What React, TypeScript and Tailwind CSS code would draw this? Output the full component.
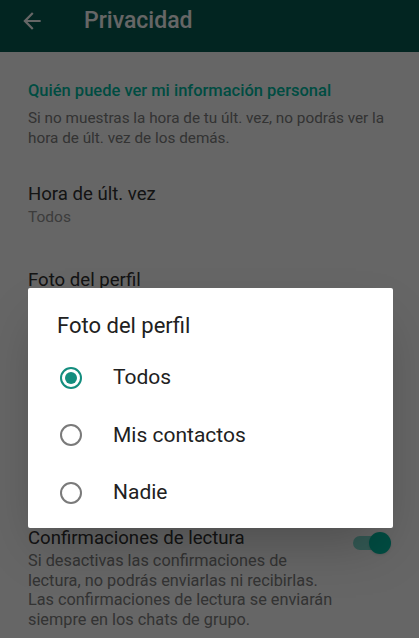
import React from "react"

const font = { fontFamily: "Roboto, 'Noto Sans', Arial, sans-serif" }

function Item({ title, value }: { title: string; value: string }) {
  return (
    <div className="px-[28px] py-5">
      <div className="text-[18.6px] leading-[24px] text-[#333]">{title}</div>
      <div className="text-[15.5px] leading-[22px] text-[#969696]">{value}</div>
    </div>
  )
}

function Radio({ checked, label }: { checked?: boolean; label: string }) {
  return (
    <div className="flex items-center h-[57.5px] pl-[32px]">
      <div
        className={
          checked
            ? "w-[22px] h-[22px] rounded-full border-[2.5px] border-[#138d7e] flex items-center justify-center"
            : "w-[22px] h-[22px] rounded-full border-[2px] border-[#7a7a7a]"
        }
      >
        {checked && <div className="w-[12px] h-[12px] rounded-full bg-[#138d7e]" />}
      </div>
      <span className="ml-[31px] text-[21px] text-[#212121]">{label}</span>
    </div>
  )
}

export default function App() {
  return (
    <div className="relative w-[419px] h-[638px] overflow-hidden bg-white" style={font}>
      <header className="h-[52px] bg-[#075E54] flex items-center pb-[10px] text-white">
        <svg className="ml-[19px]" width="26" height="26" viewBox="0 0 24 24" fill="currentColor">
          <path d="M20 11H7.83l5.59-5.59L12 4l-8 8 8 8 1.41-1.41L7.83 13H20v-2z" />
        </svg>
        <h1 className="ml-[39px] text-[23px] font-medium">Privacidad</h1>
      </header>

      <section className="px-[28px] pt-[29px] pb-[14px]">
        <div className="text-[16.5px] leading-[20px] font-medium text-[#00BFA5]">
          Quién puede ver mi información personal
        </div>
        <p className="mt-[8px] text-[15.3px] leading-[19.5px] text-[#808080]">
          Si no muestras la hora de tu últ. vez, no podrás ver la hora de últ. vez de los demás.
        </p>
      </section>

      <Item title="Hora de últ. vez" value="Todos" />
      <Item title="Foto del perfil" value="Todos" />
      <Item title="Info." value="Todos" />
      <Item title="Estado" value="Mis contactos" />

      <div className="flex px-[28px] pt-5">
        <div className="flex-1">
          <div className="text-[18.6px] leading-[24px] text-[#333]">Confirmaciones de lectura</div>
          <p className="mt-[1px] text-[16.3px] leading-[19.5px] text-[#808080] w-[310px]">
            Si desactivas las confirmaciones de lectura, no podrás enviarlas ni recibirlas. Las
            confirmaciones de lectura se enviarán siempre en los chats de grupo.
          </p>
        </div>
        <div className="relative w-[40px] h-[24px] mt-[5px] -mr-[2px] flex items-center">
          <div className="w-[34px] h-[14px] rounded-full bg-[#00BFA5]/50" />
          <div className="absolute right-[2px] w-[22px] h-[22px] rounded-full bg-[#00BFA5] shadow" />
        </div>
      </div>

      <div className="absolute inset-0 bg-black/60" />

      <div className="absolute left-[28px] top-[288px] w-[365px] h-[240px] bg-white rounded-[2px] shadow-2xl">
        <div className="pt-[24px] pl-[29px] text-[22px] leading-[28px] text-[#212121]">
          Foto del perfil
        </div>
        <div className="mt-[9px]">
          <Radio checked label="Todos" />
          <Radio label="Mis contactos" />
          <Radio label="Nadie" />
        </div>
      </div>
    </div>
  )
}
